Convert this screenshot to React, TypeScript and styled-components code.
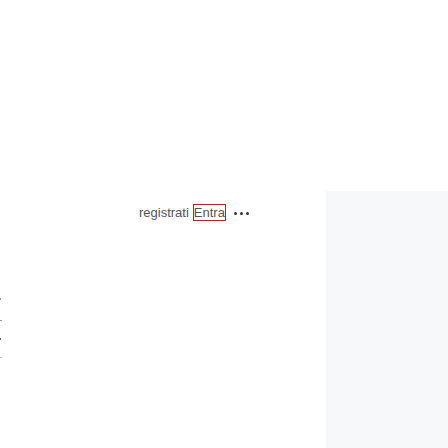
import React from "react";
import styled, { createGlobalStyle } from "styled-components";

const Global = createGlobalStyle`
  html, body { margin: 0; padding: 0; background: #ffffff; }
  body { width: 448px; height: 448px; overflow: hidden; font-family: "Liberation Sans", Arial, sans-serif; }
`;

const Page = styled.div`
  display: grid;
  grid-template-columns: 326px 122px;
  grid-template-rows: 191px 257px;
  width: 448px;
  height: 448px;
`;

const TopSpace = styled.div`
  grid-column: 1 / 3;
`;

const Main = styled.div`
  display: flex;
  flex-direction: column;
`;

const Toolbar = styled.div`
  display: flex;
  align-items: center;
  padding: 13px 0 0 139px;
  height: 17px;
  font-size: 13px;
  color: #555;
`;

const Link = styled.span`
  line-height: 17px;
  margin-right: 4px;
`;

const LoginBox = styled.span`
  box-sizing: border-box;
  height: 17px;
  width: 33px;
  border: 1px solid #ff0000;
  padding: 0;
  line-height: 15px;
  color: #555;
  margin-right: 8px;
  white-space: nowrap;
`;

const Dots = styled.div`
  display: flex;
  gap: 3px;
  margin-top: 2px;
`;

const Dot = styled.span`
  width: 3px;
  height: 3px;
  border-radius: 50%;
  background: #333;
`;

const Marks = styled.div`
  display: flex;
  flex-direction: column;
  align-items: flex-start;
  padding-top: 77px;
`;

const Mark = styled.span<{ $w: number; $h: number; $c: string; $gap: number }>`
  display: block;
  width: ${(p) => p.$w}px;
  height: ${(p) => p.$h}px;
  background: ${(p) => p.$c};
  margin-top: ${(p) => p.$gap}px;
`;

const Panel = styled.div`
  background: #f7f8fa;
`;

export default function App() {
  return (
    <>
      <Global />
      <Page>
        <TopSpace />
        <Main>
          <Toolbar>
            <Link>registrati</Link>
            <LoginBox>Entra</LoginBox>
            <Dots>
              <Dot />
              <Dot />
              <Dot />
            </Dots>
          </Toolbar>
          <Marks>
            <Mark $w={1} $h={2} $c="#6f9ae8" $gap={0} />
            <Mark $w={2} $h={1} $c="#9a9a9a" $gap={20} />
            <Mark $w={1} $h={2} $c="#666666" $gap={17} />
            <Mark $w={2} $h={1} $c="#c4c4c4" $gap={17} />
          </Marks>
        </Main>
        <Panel />
      </Page>
    </>
  );
}
